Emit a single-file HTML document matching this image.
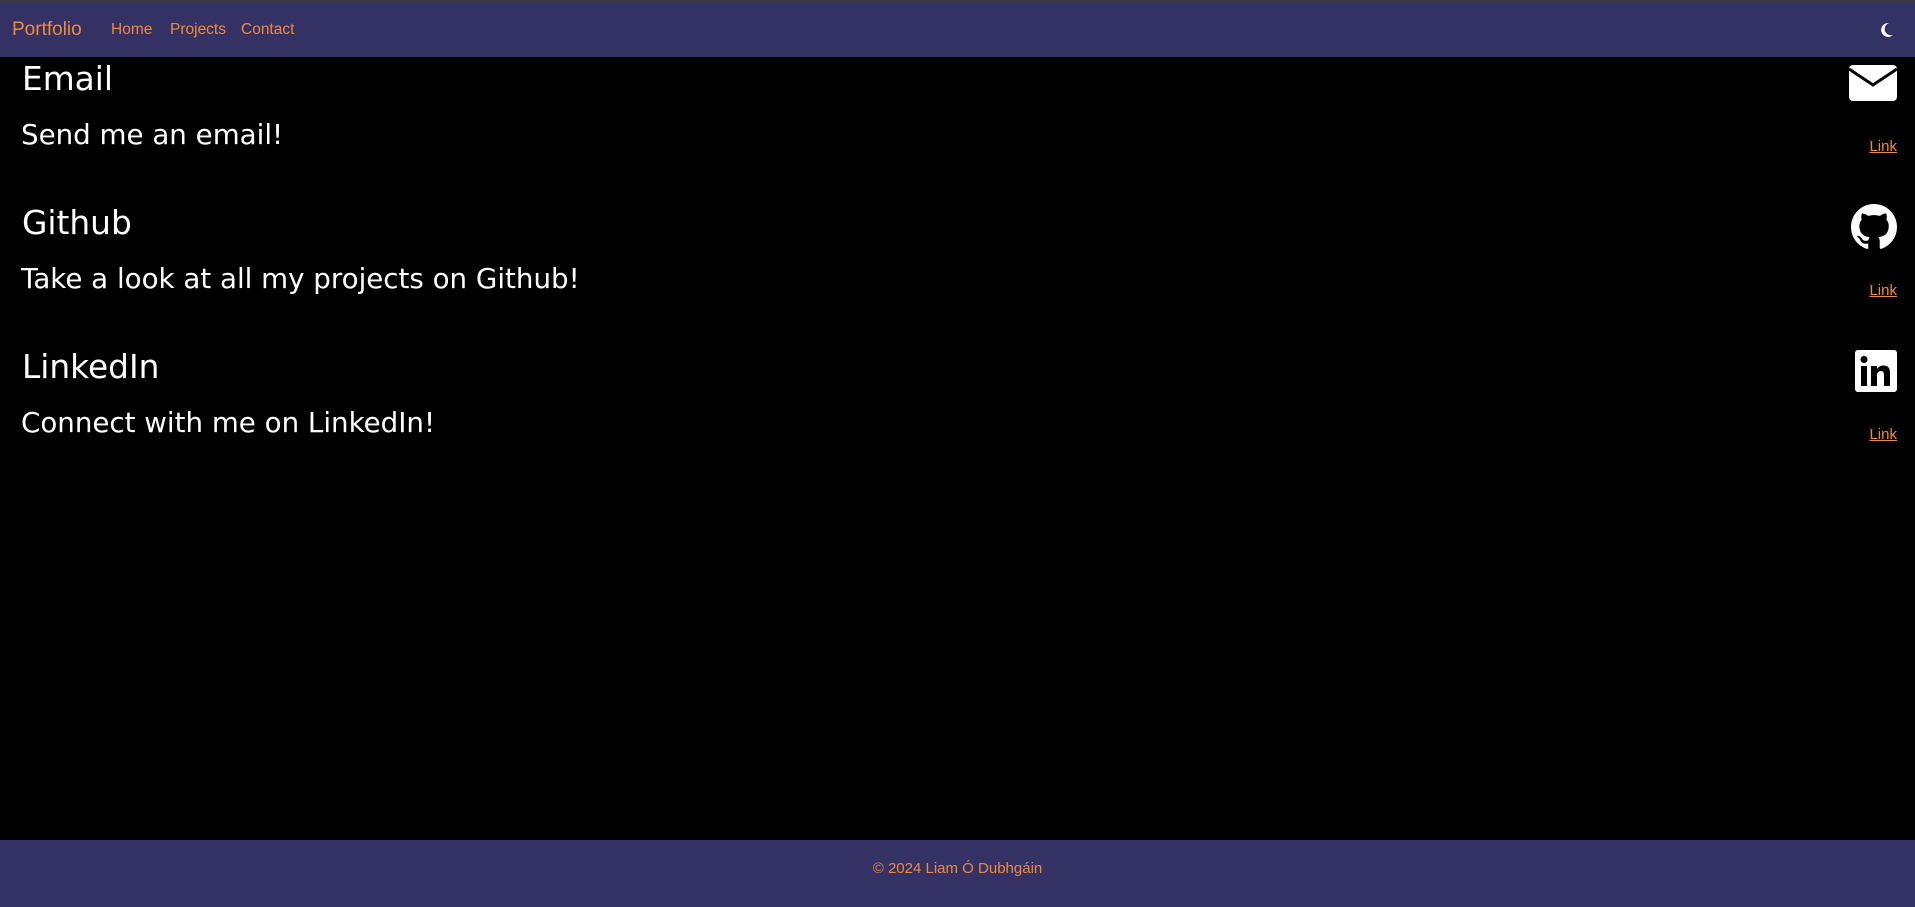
<!DOCTYPE html>
<html><head><meta charset="utf-8"><style>
*{margin:0;padding:0;box-sizing:border-box}
body{width:1915px;height:907px;background:#000;overflow:hidden;position:relative;font-family:"Liberation Sans",sans-serif}
nav{position:absolute;top:0;left:0;width:1915px;height:57px;background:#343264;border-top:2px solid #3c3c3c}
nav span{position:absolute;color:#f0883e;top:19px;font-size:15.5px}
.brand{font-size:19px!important;top:17px!important;left:12px}
.h{position:absolute;left:22px;color:#fff;font-family:"DejaVu Sans",sans-serif;font-size:32.8px;white-space:nowrap}
.p{position:absolute;left:21px;color:#fff;font-family:"DejaVu Sans",sans-serif;font-size:27.7px;white-space:nowrap}
.l{position:absolute;right:18px;color:#f0883e;text-decoration:underline;font-size:15px}
svg{position:absolute}
footer{position:absolute;left:0;top:840px;width:1915px;height:67px;background:#343264;color:#f0883e;text-align:center;font-size:15px;line-height:57px}
</style></head><body>
<nav>
<span class="brand">Portfolio</span>
<span style="left:111px">Home</span>
<span style="left:170px">Projects</span>
<span style="left:241px">Contact</span>
<svg style="left:1880px;top:20px" width="14" height="16" viewBox="0 0 14 16"><path d="M9 1A7 7 0 1 0 13 13 6 6 0 0 1 9 1z" fill="#fff"/></svg>
</nav>
<div class="h" style="top:60px">Email</div>
<div class="p" style="top:118px">Send me an email!</div>
<div class="h" style="top:204px">Github</div>
<div class="p" style="top:262px">Take a look at all my projects on Github!</div>
<div class="h" style="top:348px">LinkedIn</div>
<div class="p" style="top:406px">Connect with me on LinkedIn!</div>

<svg style="left:1849px;top:65px" width="48" height="36" viewBox="0 0 48 36"><rect x="0" y="0" width="48" height="36" rx="4" fill="#fff"/><path d="M0 4 L24 20 L48 4" stroke="#000" stroke-width="3" fill="none"/></svg>
<a class="l" style="top:138px">Link</a>

<svg style="left:1851px;top:204px" width="46" height="46" viewBox="0 0 16 16"><path fill="#fff" d="M8 0C3.580 0 0 3.580 0 8c0 3.540 2.290 6.530 5.470 7.590.4.07.55-.17.55-.38 0-.19-.01-.82-.01-1.490-2.010.37-2.530-.49-2.690-.94-.09-.23-.48-.94-.82-1.130-.28-.15-.68-.52-.01-.53.63-.01 1.080.58 1.230.82.72 1.210 1.870.87 2.330.66.07-.52.28-.87.51-1.070-1.780-.2-3.640-.89-3.640-3.950 0-.87.31-1.590.82-2.150-.08-.2-.36-1.020.08-2.120 0 0 .67-.21 2.200.82.64-.18 1.320-.27 2-.27.68 0 1.360.09 2 .27 1.530-1.040 2.200-.82 2.200-.82.44 1.100.16 1.920.08 2.120.51.56.82 1.270.82 2.150 0 3.070-1.870 3.750-3.650 3.950.29.25.54.73.54 1.480 0 1.070-.01 1.930-.01 2.200 0 .21.15.46.55.38A8.010 8.010 0 0 0 16 8c0-4.420-3.580-8-8-8z"/></svg>
<a class="l" style="top:282px">Link</a>

<svg style="left:1855px;top:350px" width="42" height="42" viewBox="0 0 42 42"><rect width="42" height="42" rx="3" fill="#fff"/><rect x="6" y="16" width="6" height="20" fill="#000"/><circle cx="9" cy="9.5" r="3.5" fill="#000"/><path d="M16 16h6v3c1.5-2.5 4-3.5 6.5-3.5 5 0 6.5 3 6.5 8V36h-6V25c0-2.5-.8-4-3-4s-4 1.5-4 4.5V36h-6z" fill="#000"/></svg>
<a class="l" style="top:426px">Link</a>

<footer>© 2024 Liam Ó Dubhgáin</footer>
</body></html>
